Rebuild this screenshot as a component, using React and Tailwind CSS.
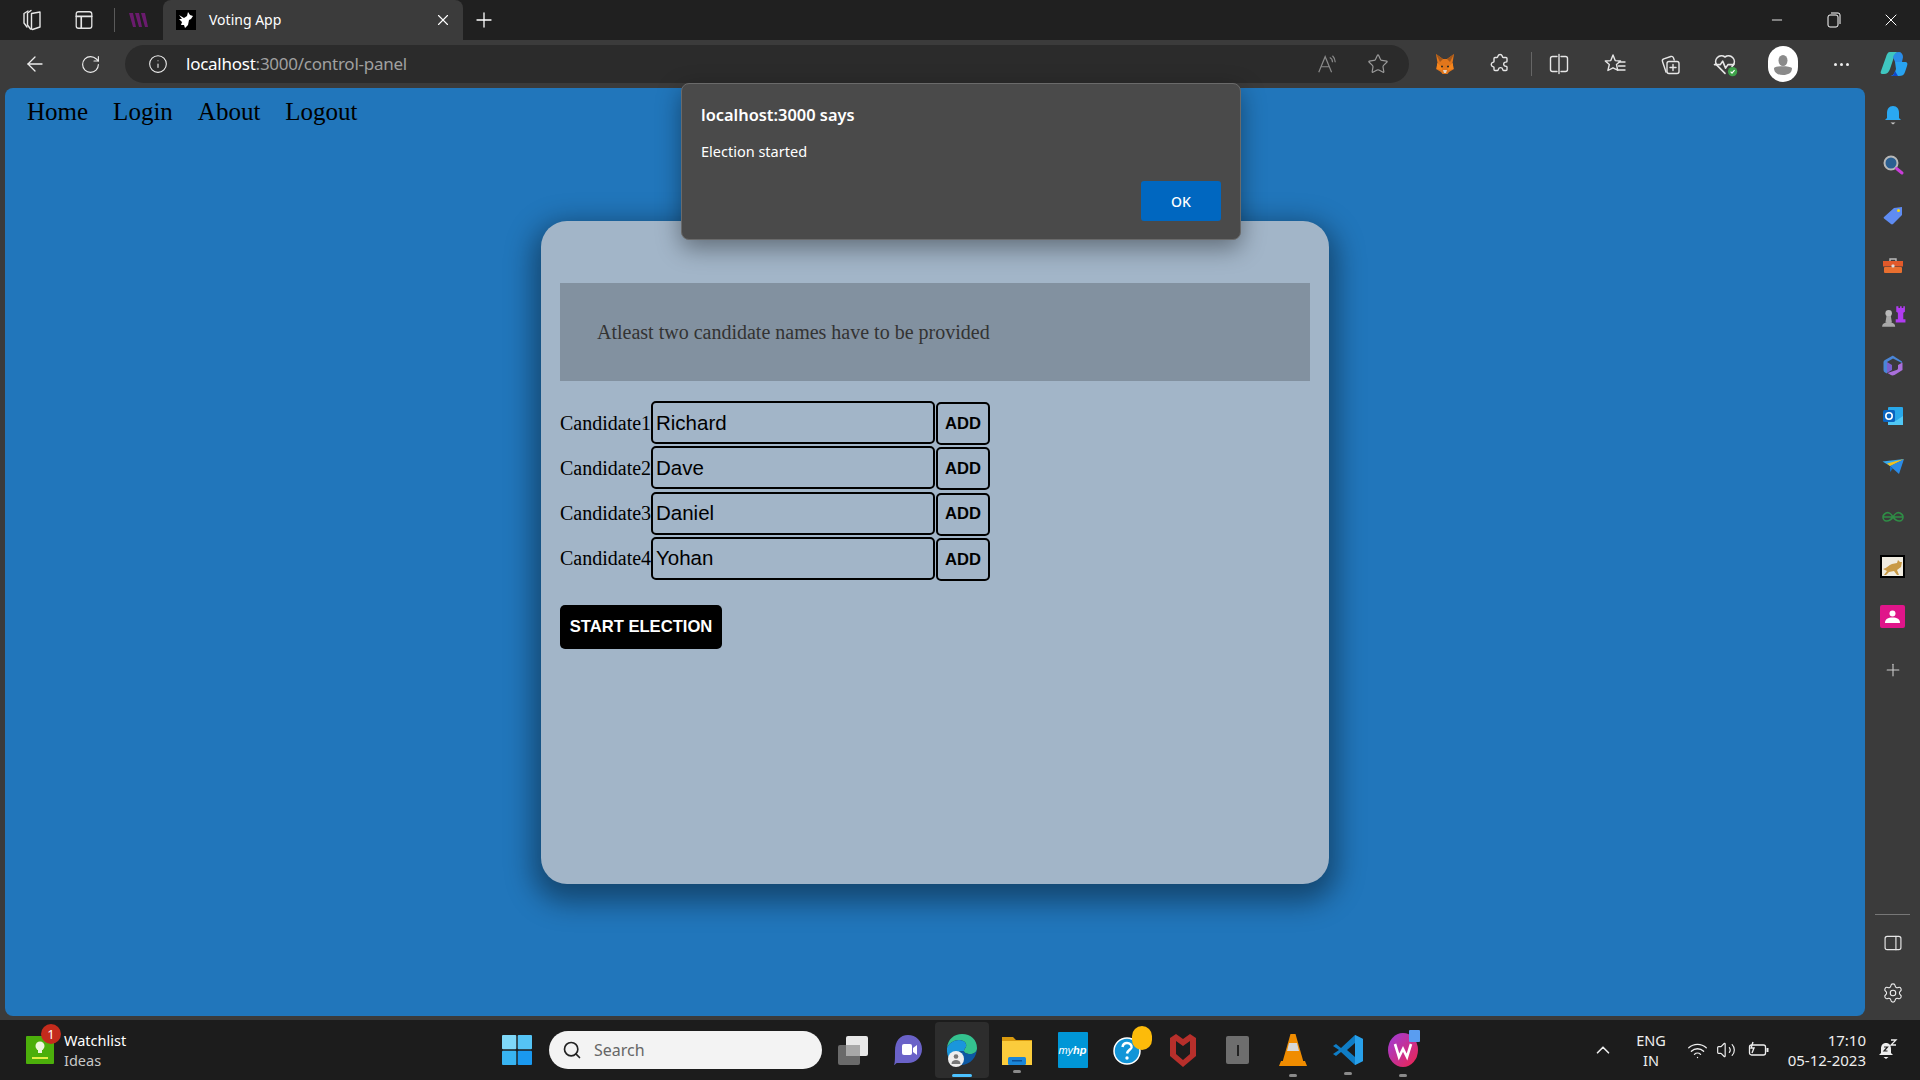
import React from 'react';
import {
  ArrowLeft, RotateCw, Info, Star, Plus, X, Minus, Search, Settings, Wifi, Volume2, ChevronUp,
} from 'lucide-react';

const chrome = "font-['Noto_Sans',sans-serif]";

const Svg = ({ size = 24, children, className = '' }) => (
  <svg width={size} height={size} viewBox="0 0 24 24" fill="none" className={className}>{children}</svg>
);
const line = { stroke: '#e6e6e6', strokeWidth: 1.4, strokeLinecap: 'round', strokeLinejoin: 'round' };

const Workspaces = () => (
  <Svg size={24}>
    <path d="M8 3 4 5.5V15l3 4" {...line} />
    <path d="M11 2.5 7.5 5v12l3 4" {...line} />
    <path d="M11.5 5.5 20 4v15l-7.5 2.5a1 1 0 0 1-1-1z" {...line} />
  </Svg>
);
const TabActions = () => (
  <Svg size={22}>
    <rect x="3.5" y="3" width="17" height="18" rx="2.5" {...line} />
    <path d="M3.5 8h17M9 8v13" {...line} strokeWidth="1.8" />
  </Svg>
);
const Fox = () => (
  <Svg size={24}>
    <path d="M3 2l7 5h4l7-5-1.5 9 1.5 6-5 3-1.5 2h-5L8 20l-5-3 1.5-6z" fill="#e2761b" />
    <path d="M4 11l4 3 2-1-1 5-5-1zM20 11l-4 3-2-1 1 5 5-1z" fill="#f6851b" />
    <path d="M3 2l7 5-3 3zM21 2l-7 5 3 3z" fill="#a0561a" />
    <path d="M10 18h4l-1 3h-2z" fill="#e4d5c7" />
    <circle cx="9" cy="14.5" r="1" fill="#222" /><circle cx="15" cy="14.5" r="1" fill="#222" />
  </Svg>
);
const PuzzleIcon = () => (
  <Svg size={24}>
    <path d="M10 4a2.2 2.2 0 0 1 4.2 0c.2 1 .3 1.5 1 1.5H18a1 1 0 0 1 1 1v2.8c0 .7-.6.8-1.2.8a2.1 2.1 0 0 0 0 4.2c.6 0 1.2.1 1.2.8v2.4a1 1 0 0 1-1 1h-2.5c-.7 0-.7-.6-.8-1.1a2.2 2.2 0 0 0-4.3 0c-.1.5-.2 1.1-.9 1.1H7a1 1 0 0 1-1-1v-2c0-.7-.7-.8-1.2-.9a2.2 2.2 0 0 1 0-4.2c.5-.1 1.2-.2 1.2-.9V6.500a1 1 0 0 1 1-1h2c.6 0 .8-.7 1-1.500z" {...line} />
  </Svg>
);
const SplitIcon = () => (
  <Svg size={24}>
    <path d="M10 4.5H5.500a2 2 0 0 0-2 2v11a2 2 0 0 0 2 2H10M14 4.500h4.500a2 2 0 0 1 2 2v11a2 2 0 0 1-2 2H14M12 2.500v19" {...line} />
  </Svg>
);
const FavList = () => (
  <Svg size={24}>
    <path d="M10 3l2.200 5.600 5.300.4-4 3.600 1.200 5.600L10 15.800 4.900 18.500l1.400-5.900-4-3.600 5.500-.4z" {...line} />
    <path d="M16 10h6M15.500 14h6.500M14.500 18h7.500" {...line} />
  </Svg>
);
const Collections = () => (
  <Svg size={24}>
    <path d="M8 20 4.500 9.500c-.4-1.200.2-2.300 1.300-2.700l7-2.300c1.200-.4 2.200.2 2.600 1.300l.8 2.200" {...line} />
    <rect x="9" y="9.500" width="12" height="12" rx="2" {...line} />
    <path d="M15 12.500v6M12 15.500h6" {...line} />
  </Svg>
);
const Health = () => (
  <Svg size={28}>
    <path d="M12 20 5 13a5 5 0 0 1 7-7 5 5 0 0 1 7 7l-1 1" {...line} />
    <path d="M3 12.500h5l2-3 2.500 6 2-3h5" {...line} />
    <circle cx="18.500" cy="18.500" r="4" fill="#3ea34a" />
    <path d="M16.800 18.600l1.200 1.200 2.200-2.500" stroke="#fff" strokeWidth="1" fill="none" />
  </Svg>
);
const Avatar = () => (
  <div className="w-[30px] h-[36px] rounded-full bg-white flex items-center justify-center overflow-hidden">
    <svg width="30" height="30" viewBox="0 0 30 30">
      <ellipse cx="15" cy="11.500" rx="4.500" ry="5.500" fill="#8a8a8a" />
      <path d="M6 19c3-2.500 15-2.500 18 0 0 5-4 7-9 7s-9-2-9-7z" fill="#8a8a8a" />
    </svg>
  </div>
);
const Copilot = () => (
  <svg width="30" height="30" viewBox="0 0 30 30">
    <path d="M11 3h8c-3 1-4 4-5 8l-3 9c-1 3-3 5-6 5H3c-1 0-2-1-1-3l5-14c.7-3 2-5 4-5z" fill="#3fc6c0" />
    <path d="M14 8c1-3 3-5 6-5 2 0 4 2 4 5l-1 5h-7z" fill="#2a8ce8" />
    <path d="M16 13h10c2 0 3 1 2 4l-2 6c-1 3-3 4-6 4h-8c3-1 4-4 5-7z" fill="#28a3f0" />
    <path d="M11 27c3 0 4-2 5-5l3 5z" fill="#1246c8" />
  </svg>
);

const Bell = () => (
  <Svg size={24}>
    <path d="M12 3c4 0 6 3 6 7v5l2 2H4l2-2v-5c0-4 2-7 6-7z" fill="#2aa8f2" />
    <path d="M9.500 19.500h5L12 21.500z" fill="#c8c8c8" />
  </Svg>
);
const Magnifier = () => (
  <Svg size={24}>
    <circle cx="10" cy="10" r="6.500" fill="#2b5f91" stroke="#b8b8b8" strokeWidth="2" />
    <path d="M15.500 15.500 21 20" stroke="#c93dd8" strokeWidth="3" strokeLinecap="round" />
  </Svg>
);
const Tag = () => (
  <Svg size={24}>
    <path d="M3 14 13 5l8-1v8l-9 9a1.500 1.500 0 0 1-2 0l-7-5.500a1 1 0 0 1 0-1.500z" fill="#5f8cf2" />
    <circle cx="17.500" cy="7.500" r="1.500" fill="#f5d90a" />
  </Svg>
);
const Toolbox = () => (
  <Svg size={24}>
    <path d="M9 7V5h6v2" stroke="#bbb" strokeWidth="1.400" />
    <rect x="2" y="7" width="20" height="5.500" fill="#e2592a" />
    <rect x="3" y="13" width="18" height="6" rx="1" fill="#e96f2f" />
    <rect x="10.500" y="10.500" width="3" height="3" rx="1" fill="#ddd" />
  </Svg>
);
const Chess = () => (
  <Svg size={26}>
    <path d="M15 3h2v1.500h1.500V3H20v1.500h1.500V3H23v5l-1.500 1v6h2v3h-9v-3h2V9L15 8z" fill="#b03cf0" />
    <circle cx="8" cy="9.500" r="3" fill="#b9b9b9" />
    <path d="M6 12h4l1 6H5zM2 22c0-3 2-4 6-4s6 1 6 4z" fill="#a8a8a8" />
  </Svg>
);
const Ms365 = () => (
  <Svg size={24}>
    <path d="M11 2 4 6c-1 .6-1.500 1.400-1.500 2.500v7C2.500 17 3 18 4 18.500l2 1V8l6-3.500L21 9V7.500L14 3c-1-.6-2-1.500-3-1z" fill="#4a86d8" />
    <path d="M21.500 8.500V16l-8 5c-1.500.8-3 .5-4-.2l-3-1.800 9-3c1-.4 1.500-1 1.500-2V11z" fill="#a96fdb" />
    <path d="M6 8l5 3v5l-5 3z" fill="#7a5fd0" />
  </Svg>
);
const Outlook = () => (
  <Svg size={24}>
    <rect x="7" y="3" width="15" height="18" rx="1" fill="#28a8ea" />
    <path d="M7 12l7.500 5L22 12v9H7z" fill="#50c8f5" />
    <rect x="2" y="6" width="12" height="12" rx="1.500" fill="#0a64c0" />
    <circle cx="8" cy="12" r="3.200" fill="none" stroke="#fff" strokeWidth="1.600" />
  </Svg>
);
const Send = () => (
  <Svg size={24}>
    <path d="M1.500 7.500 23 5 9 12z" fill="#35a9f0" />
    <path d="M23 5 9 12l9 8z" fill="#2b8be6" />
    <path d="M23 5 6 9.500 9 12z" fill="#f5c21a" />
    <path d="M9 12v6l3-3.500z" fill="#176fc4" />
  </Svg>
);
const GeeksLogo = () => (
  <Svg size={24}>
    <path d="M2 12h20M12 12c-2-4-5-5-7-4s-3 2-3 4 1.500 4 3.500 4 4.500-1 6.500-4zm0 0c2-4 5-5 7-4s3 2 3 4-1.500 4-3.500 4-4.500-1-6.500-4z" stroke="#2f8d46" strokeWidth="1.600" fill="none" />
  </Svg>
);
const TomcatBox = () => (
  <div className="w-[25px] h-[23px] bg-[#f0ece0] border-2 border-black flex items-center justify-center">
    <svg width="21" height="19" viewBox="0 0 21 19">
      <path d="M1 12c4-1 6-4 9-5l5-1 1-3 2 2 2 0-1 5-4 3 2 5h-2l-3-4-5 1-3 3H2l3-4z" fill="#c99a45" />
    </svg>
  </div>
);
const PersonBox = () => (
  <div className="w-[25px] h-[23px] rounded-[2px] bg-[#e0158a] flex items-center justify-center">
    <svg width="21" height="19" viewBox="0 0 21 19">
      <circle cx="10.500" cy="6.500" r="3" fill="#fff" />
      <path d="M3 16c0-4 3-5.500 7.500-5.500S18 12 18 16z" fill="#fff" />
    </svg>
  </div>
);
const PanelIcon = () => (
  <Svg size={20}>
    <rect x="2.500" y="4" width="19" height="16" rx="2.500" {...line} />
    <path d="M15.500 4v16" {...line} />
  </Svg>
);

const Watch = () => (
  <div className="relative w-[28px] h-[28px] bg-[#4caf0b] rounded-[1px] flex flex-col items-center justify-center">
    <svg width="18" height="22" viewBox="0 0 18 22">
      <circle cx="9" cy="7" r="4.500" fill="#eef7dd" />
      <rect x="7" y="11" width="4" height="3" fill="#eef7dd" />
      <rect x="1" y="18" width="16" height="2" fill="#e4ee44" />
    </svg>
    <span className="absolute top-[-12px] right-[-7px] w-[20px] h-[20px] rounded-full bg-[#c42b1c] text-white text-[13px] leading-[20px] text-center">1</span>
  </div>
);
const WinLogo = () => (
  <svg width="30" height="30" viewBox="0 0 30 30">
    <rect x="0" y="0" width="14.300" height="14.300" fill="#7fd8f8" rx="1" />
    <rect x="15.700" y="0" width="14.300" height="14.300" fill="#55c4f5" rx="1" />
    <rect x="0" y="15.700" width="14.300" height="14.300" fill="#38b4f2" rx="1" />
    <rect x="15.700" y="15.700" width="14.300" height="14.300" fill="#1a99ef" rx="1" />
  </svg>
);
const TaskView = () => (
  <svg width="32" height="32" viewBox="0 0 32 32">
    <rect x="1" y="11" width="22" height="20" rx="2" fill="#6a6a6a" />
    <rect x="9" y="2" width="22" height="20" rx="2" fill="#e8e8e8" />
    <rect x="9" y="11" width="14" height="11" fill="#a8a8a8" />
  </svg>
);
const Teams = () => (
  <svg width="30" height="34" viewBox="0 0 30 34">
    <path d="M15 2c8 0 14 6 14 14s-6 14-14 14H4c-1 0-2 2-3 2 1-2 1-6 1-14C2 8 7 2 15 2z" fill="#6a62c8" />
    <rect x="9" y="11" width="10" height="11" rx="2" fill="#fff" />
    <path d="M20 15l4-3v10l-4-3z" fill="#fff" />
  </svg>
);
const Edge = () => (
  <svg width="32" height="36" viewBox="0 0 32 36">
    <path d="M1 16C2 7 8 2 16 2c9 0 15 6 15 14 0 4-3 6-7 6-3 0-6-1-6-3 0-3 3-3 2-7-1-3-4-4-7-4C8 8 3 11 1 16z" fill="#34c28f" />
    <path d="M1 16c2-5 7-8 12-8 3 0 6 1 7 4 1 4-2 4-2 7-7 0-9 3-9 8 0 2 1 5 4 6C7 33 0 26 1 16z" fill="#1a96dc" />
    <path d="M13 33c-2-1-4-3-4-6 0-5 2-8 9-8 0 2 3 3 6 3 4 0 7-2 7-6 0 9-7 18-18 17z" fill="#0c59a4" />
    <circle cx="10" cy="27" r="8" fill="#eee" />
    <circle cx="10" cy="24.500" r="2.300" fill="#777" />
    <path d="M5.500 32c0-3 2-4 4.500-4s4.500 1 4.500 4z" fill="#777" />
  </svg>
);
const Explorer = () => (
  <svg width="32" height="32" viewBox="0 0 32 32">
    <path d="M1 3h11l3 3h16v4H1z" fill="#d99a0e" />
    <rect x="1" y="7" width="30" height="24" fill="#fbcc3c" />
    <rect x="7" y="23" width="18" height="8" rx="1.500" fill="#1a86d8" />
    <rect x="11" y="26" width="10" height="1.500" fill="#0b4f96" />
  </svg>
);
const MyHp = () => (
  <div className="w-[30px] h-[36px] bg-[#0096d6] rounded-[1px] flex items-center justify-center text-white text-[11px] italic leading-none font-['Liberation_Sans',sans-serif]">
    my<b>hp</b>
  </div>
);
const HelpIcon = () => (
  <div className="relative w-[30px] h-[30px]">
    <svg width="30" height="30" viewBox="0 0 30 30">
      <circle cx="14" cy="16" r="13" fill="#1295d8" stroke="#fff" strokeWidth="1.500" />
      <path d="M9.500 12c.5-3 2.500-4 4.500-4 3 0 5 2 4.500 4.500-.5 2-4 3-4.500 6" stroke="#fff" strokeWidth="2.500" fill="none" />
      <circle cx="14" cy="23" r="1.700" fill="#fff" />
    </svg>
    <span className="absolute top-[-9px] right-[-9px] w-[20px] h-[24px] rounded-full bg-[#fdbb0a]" />
  </div>
);
const McAfee = () => (
  <svg width="28" height="36" viewBox="0 0 28 36">
    <path d="M1 6l6-4 7 5 7-5 6 4v18L14 35 1 24z" fill="#b72f2b" />
    <path d="M7 9l7 5 7-5v13l-7 6-7-6z" fill="#1c1c1c" />
  </svg>
);
const GrayBox = () => (
  <div className="w-[23px] h-[28px] rounded-[2px] bg-[#6e6e6e] flex items-center justify-center">
    <div className="w-[2px] h-[11px] bg-[#222]" />
  </div>
);
const Vlc = () => (
  <svg width="28" height="36" viewBox="0 0 28 36">
    <path d="M2 29h24l2 5H0z" fill="#f08c00" />
    <path d="M11.500 2h5l8 28h-21z" fill="#f08c00" />
    <path d="M10 11h8l2 8H8z" fill="#d8d8d8" />
  </svg>
);
const VsCode = () => (
  <svg width="32" height="32" viewBox="0 0 32 32">
    <path d="M23 1l8 4v22l-8 4-14-13 -5 4-3-2 6-4-6-4 3-2 5 4z" fill="#0f7dc6" />
    <path d="M23 1l8 4v22l-8 4z" fill="#28a0ea" />
    <path d="M23 9l-8 7 8 7z" fill="#1c1c1c" />
  </svg>
);
const Wps = () => (
  <div className="relative w-[30px] h-[36px] flex items-center">
    <svg width="30" height="36" viewBox="0 0 30 36">
      <defs>
        <linearGradient id="wpsGrad" x1="0" y1="0" x2="1" y2="1">
          <stop offset="0" stopColor="#9c3cdc" /><stop offset="1" stopColor="#f0244c" />
        </linearGradient>
      </defs>
      <ellipse cx="15" cy="18" rx="15" ry="17" fill="url(#wpsGrad)" />
      <path d="M7 12l4 13 4-8 4 8 4-13" stroke="#fff" strokeWidth="2.600" fill="none" />
    </svg>
    <span className="absolute top-[-2px] right-[-2px] w-[11px] h-[12px] bg-[#5a9df0] rounded-[1px]" />
  </div>
);
const BatteryIcon = () => (
  <svg width="22" height="18" viewBox="0 0 22 18" fill="none">
    <rect x="1.500" y="4" width="16" height="10" rx="2" stroke="#eee" strokeWidth="1.300" />
    <rect x="18.500" y="7" width="2" height="4" fill="#eee" />
    <path d="M5 1 3 7h3l-2 5" stroke="#eee" strokeWidth="1.400" />
  </svg>
);
const SnoozeBell = () => (
  <svg width="20" height="22" viewBox="0 0 20 22">
    <path d="M8 4c3 0 5 2 5 6v4l2 2H1l2-2v-4c0-4 2-6 5-6z" fill="#eee" />
    <path d="M5.500 18h5L8 20z" fill="#eee" />
    <path d="M6 8h3.500L6 12h3.500" stroke="#222" strokeWidth="1.200" fill="none" />
    <path d="M13 1h5l-5 5h5" stroke="#eee" strokeWidth="1.300" fill="none" />
  </svg>
);

const Slot = ({ w, children, className = '' }) => (
  <div className={`flex items-center justify-center shrink-0 ${className}`} style={{ width: w }}>{children}</div>
);

const TitleBar = () => (
  <div className="h-[40px] bg-[#202020] flex items-center shrink-0">
    <Slot w={64}><Workspaces /></Slot>
    <Slot w={40}><TabActions /></Slot>
    <div className="w-px h-[24px] bg-[#5a5a5a] ml-[10px]" />
    <div className="w-[48px] flex justify-center">
      <svg width="20" height="16" viewBox="0 0 20 16"><path d="M0 1h4l3 14H4zM6 1h4l3 14h-3zM12 1h4l3 14h-3z" fill="#6a1b6e" /></svg>
    </div>
    <div className="w-[300px] h-[40px] bg-[#3b3b3b] rounded-t-[8px] flex items-center pl-[13px]">
      <div className="w-[20px] h-[20px] bg-black flex items-center justify-center">
        <svg width="18" height="18" viewBox="0 0 18 18"><path d="M2 4l5 3 3-2 1-4 2 3 3 1-2 3-2 1-1 5-3 3-1-3-3 0 1-3-3-3 3 0z" fill="#fff" /></svg>
      </div>
      <span className={`ml-[13px] text-[14px] leading-[20px] pb-[1px] text-white ${chrome}`}>Voting App</span>
      <X size={18} strokeWidth={1.5} className="text-white ml-auto mr-[11px]" />
    </div>
    <Slot w={42}><Plus size={24} strokeWidth={1.3} className="text-white" /></Slot>
    <div className="ml-auto flex items-center">
      <Slot w={57}><Minus size={16} strokeWidth={1.3} className="text-white" /></Slot>
      <Slot w={57}>
        <svg width="14" height="16" viewBox="0 0 14 16" fill="none" stroke="#fff"><rect x="1" y="3" width="10" height="12" rx="2" /><path d="M4 1h7a2 2 0 0 1 2 2v9" /></svg>
      </Slot>
      <Slot w={58}><X size={20} strokeWidth={1.2} className="text-white" /></Slot>
    </div>
  </div>
);

const Toolbar = () => (
  <div className="h-[48px] bg-[#3b3b3b] flex items-center shrink-0">
    <Slot w={70}><ArrowLeft size={24} strokeWidth={1.3} className="text-[#eee]" /></Slot>
    <Slot w={40}><RotateCw size={21} strokeWidth={1.3} className="text-[#eee]" /></Slot>
    <div className="ml-[15px] w-[1284px] h-[38px] rounded-full bg-[#2b2b2b] flex items-center pl-[23px] pr-[20px]">
      <Info size={20} strokeWidth={1.3} className="text-[#eee]" />
      <span className={`ml-[18px] text-[17px] ${chrome} text-white tracking-[-0.25px]`}>localhost<span className="text-[#a0a0a0]">:3000/control-panel</span></span>
      <svg width="22" height="22" viewBox="0 0 24 24" fill="none" stroke="#8a8a8a" strokeWidth="1.3" className="ml-auto"><path d="M3 21 10 4l7 17M6 15h8M15 5c2 1 3 3 3 5M18 3c2 2 3 4 3 7" /></svg>
      <Star size={22} strokeWidth={1.3} className="text-[#9a9a9a] ml-[29px]" />
    </div>
    <Slot w={71}><Fox /></Slot>
    <Slot w={40}><PuzzleIcon /></Slot>
    <div className="w-px h-[24px] bg-[#666] ml-[11px]" />
    <Slot w={57} className="-ml-[2px]"><SplitIcon /></Slot>
    <Slot w={55}><FavList /></Slot>
    <Slot w={55}><Collections /></Slot>
    <Slot w={56}><Health /></Slot>
    <Slot w={60}><Avatar /></Slot>
    <Slot w={56}><span className="flex gap-[3px]"><i className="w-[3px] h-[3px] bg-[#eee] rounded-full" /><i className="w-[3px] h-[3px] bg-[#eee] rounded-full" /><i className="w-[3px] h-[3px] bg-[#eee] rounded-full" /></span></Slot>
    <Slot w={50}><Copilot /></Slot>
  </div>
);

const candidates = ['Richard', 'Dave', 'Daniel', 'Yohan'];

const ControlPanel = () => (
  <div className="w-[788px] h-[663px] mx-auto mt-[93px] bg-[#a2b5c8] rounded-[26px] shadow-[0_10px_28px_8px_rgba(0,0,0,0.4)] px-[19px] pt-[62px]">
    <div className="h-[98px] bg-[#8291a0] pl-[37px] flex items-center text-[20px] text-[#333]">
      Atleast two candidate names have to be provided
    </div>
    <div className="mt-[20px] flex flex-col gap-[0.33px]">
      {candidates.map((name, i) => (
        <div key={name} className="flex items-start h-[45px]">
          <label className="w-[91px] h-[43px] flex items-center text-[20px] text-black">Candidate{i + 1}</label>
          <input
            readOnly
            value={name}
            className="w-[284px] h-[43px] border-2 border-black rounded-[5px] bg-transparent px-[3px] text-[20.5px] text-black outline-none font-['Liberation_Sans',sans-serif]"
          />
          <button className="w-[54px] h-[43px] ml-[1px] mt-[1px] pt-[1px] border-2 border-black rounded-[5px] text-[16.6px] font-bold text-black font-['Liberation_Sans',sans-serif]">ADD</button>
        </div>
      ))}
    </div>
    <button className="mt-[23px] w-[162px] h-[44px] bg-black rounded-[5px] text-white text-[16.6px] font-bold font-['Liberation_Sans',sans-serif]">START ELECTION</button>
  </div>
);

const Sidebar = () => (
  <div className="w-[55px] shrink-0 flex flex-col items-center pt-[2px]">
    {[<Bell />, <Magnifier />, <Tag />, <Toolbox />, <Chess />, <Ms365 />, <Outlook />, <Send />, <GeeksLogo />, <TomcatBox />, <PersonBox />].map((icon, i) => (
      <div key={i} className="h-[50.2px] w-full flex items-center justify-center">{icon}</div>
    ))}
    <div className="h-[56px] flex items-center"><Plus size={20} strokeWidth={1.3} className="text-[#ccc]" /></div>
    <div className="mt-auto w-[35px] h-px bg-[#777]" />
    <div className="h-[56px] flex items-center"><PanelIcon /></div>
    <div className="h-[49px] flex items-start pt-[11px]"><Settings size={22} strokeWidth={1.2} className="text-[#eee]" /></div>
  </div>
);

const Taskbar = () => (
  <div className={`h-[60px] bg-[#1c1c1c] flex items-center shrink-0 ${chrome}`}>
    <div className="w-[26px]" />
    <Watch />
    <div className="ml-[10px] w-[95px] leading-[20px]">
      <div className="text-[14.5px] text-white">Watchlist</div>
      <div className="text-[14.5px] text-[#c8c8c8]">Ideas</div>
    </div>
    <div className="ml-[343px]"><WinLogo /></div>
    <div className="ml-[17px] w-[273px] h-[38px] rounded-full bg-[#f3f3f3] flex items-center pl-[13px] text-[#666]">
      <Search size={20} strokeWidth={2} className="text-[#222]" />
      <span className="ml-[12px] text-[16px]">Search</span>
    </div>
    <Slot w={62}><TaskView /></Slot>
    <Slot w={47}><Teams /></Slot>
    <Slot w={54} className="relative ml-[4px] h-[56px] bg-[#2d2d2d] rounded-[4px]">
      <Edge />
      <span className="absolute bottom-[1px] w-[20px] h-[3px] rounded-full bg-[#4cc2ff]" />
    </Slot>
    <Slot w={56} className="relative"><Explorer /><span className="absolute bottom-[-7px] w-[8px] h-[3px] rounded-full bg-[#8a8a8a]" /></Slot>
    <Slot w={55}><MyHp /></Slot>
    <Slot w={55}><HelpIcon /></Slot>
    <Slot w={55}><McAfee /></Slot>
    <Slot w={55}><GrayBox /></Slot>
    <Slot w={55} className="relative"><Vlc /><span className="absolute bottom-[-9px] w-[8px] h-[3px] rounded-full bg-[#8a8a8a]" /></Slot>
    <Slot w={55} className="relative"><VsCode /><span className="absolute bottom-[-9px] w-[8px] h-[3px] rounded-full bg-[#8a8a8a]" /></Slot>
    <Slot w={55} className="relative"><Wps /><span className="absolute bottom-[-9px] w-[8px] h-[3px] rounded-full bg-[#8a8a8a]" /></Slot>
    <div className="ml-auto flex items-center text-[#eee]">
      <ChevronUp size={22} strokeWidth={1.8} />
      <div className="ml-[17px] w-[40px] text-center text-[14.5px] leading-[20px]">ENG<br />IN</div>
      <Wifi size={21} strokeWidth={1.5} className="ml-[16px]" />
      <Volume2 size={20} strokeWidth={1.4} className="ml-[8px]" />
      <div className="ml-[12px]"><BatteryIcon /></div>
      <div className="ml-[6px] w-[90px] text-right text-[15px] leading-[20px]">17:10<br />05-12-2023</div>
      <div className="ml-[12px] mr-[22px]"><SnoozeBell /></div>
    </div>
  </div>
);

const AlertDialog = () => (
  <div className={`absolute left-[681px] top-[83px] w-[560px] h-[157px] bg-[#4a4a4a] border border-[#6a6a6a] rounded-[8px] shadow-[0_8px_24px_rgba(0,0,0,0.4)] flex flex-col pl-[19px] pr-[19px] pt-[19px] pb-[18px] ${chrome}`}>
    <div className="text-[16.4px] font-semibold leading-[24px] text-white">localhost:3000 says</div>
    <div className="mt-[14px] text-[14.5px] leading-[20px] text-white">Election started</div>
    <div className="mt-auto flex justify-end">
      <button className="w-[80px] h-[40px] rounded-[3px] bg-[#0067c0] text-white text-[14px] font-medium">OK</button>
    </div>
  </div>
);

export default function App() {
  return (
    <div className="relative w-[1920px] h-[1080px] overflow-hidden bg-[#3b3b3b] flex flex-col font-['Liberation_Serif',serif]">
      <TitleBar />
      <Toolbar />
      <div className="flex-1 flex min-h-0">
        <div className="ml-[5px] w-[1860px] mb-[4px] bg-[#2176bb] rounded-[8px] overflow-hidden">
          <nav className="flex gap-[25px] pl-[22px] pt-[8px] text-[25px] leading-[32px] text-black">
            <a>Home</a><a>Login</a><a>About</a><a>Logout</a>
          </nav>
          <ControlPanel />
        </div>
        <Sidebar />
      </div>
      <Taskbar />
      <AlertDialog />
    </div>
  );
}
